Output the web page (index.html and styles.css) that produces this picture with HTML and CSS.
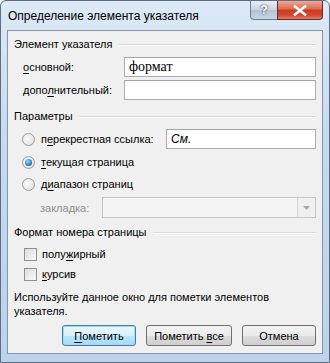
FILE: index.html
```html
<!DOCTYPE html>
<html lang="ru">

<head>
  <meta charset="UTF-8">
  <title>Определение элемента указателя</title>
  <link rel="stylesheet" href="styles.css">
</head>

<body>

  <div class="ventana">
    <div class="titulo">
      <span class="titulo-texto">Определение элемента указателя</span>
      <div class="titulo-botones">
        <span class="btn-ayuda">?</span>
        <span class="btn-cerrar">
          <svg width="14" height="11" viewBox="0 0 14 11">
            <path d="M2 1.5 L12 9.5 M12 1.5 L2 9.5" stroke="#fff" stroke-width="2.6" stroke-linecap="square"/>
          </svg>
        </span>
      </div>
    </div>

    <div class="cliente">
      <div class="grupo-titulo">Элемент указателя</div>

      <div class="fila fila-campo primera">
        <label class="etiqueta"><u>о</u>сновной:</label>
        <div class="campo campo-serif">формат</div>
      </div>
      <div class="fila fila-campo segunda">
        <label class="etiqueta">допо<u>л</u>нительный:</label>
        <div class="campo"></div>
      </div>

      <div class="grupo-titulo param">Параметры</div>

      <div class="fila radio-fila r1">
        <span class="radio"></span>
        <span class="texto-opcion">п<u>е</u>рекрестная ссылка:</span>
        <div class="campo campo-ref"><i>См.</i></div>
      </div>
      <div class="fila radio-fila r2">
        <span class="radio marcado"></span>
        <span class="texto-opcion"><u>т</u>екущая страница</span>
      </div>
      <div class="fila radio-fila r3">
        <span class="radio"></span>
        <span class="texto-opcion">д<u>и</u>апазон страниц</span>
      </div>
      <div class="fila fila-marcador">
        <span class="texto-gris">закладка:</span>
        <div class="combo">
          <span class="combo-flecha">
            <svg width="7" height="4" viewBox="0 0 7 4"><path d="M0 0 H7 L3.5 4 Z" fill="#a8a8a8"/></svg>
          </span>
        </div>
      </div>

      <div class="grupo-titulo formato">Формат номера страницы</div>

      <div class="fila check-fila c1">
        <span class="casilla"></span>
        <span class="texto-opcion">полу<u>ж</u>ирный</span>
      </div>
      <div class="fila check-fila c2">
        <span class="casilla"></span>
        <span class="texto-opcion"><u>к</u>урсив</span>
      </div>

      <p class="nota">Используйте данное окно для пометки элементов<br>указателя.</p>

      <div class="botones">
        <button class="boton predeterminado"><u>П</u>ометить</button>
        <button class="boton ancho">Пометить <u>в</u>се</button>
        <button class="boton">Отмена</button>
      </div>
    </div>
  </div>

</body>

</html>
```

FILE: styles.css
```css
body {
  margin: 0;
  font-family: "Liberation Sans", Arial, sans-serif;
  font-size: 11px;
  color: #000;
  background: #fff;
}

u {
  text-decoration-thickness: 1px;
  text-underline-offset: 2px;
}

.ventana {
  width: 330px;
  height: 363px;
  box-sizing: border-box;
  border: 1px solid #5c6f86;
  border-radius: 6px 6px 0 0;
  background: linear-gradient(#dde9f6, #c6d9ee 40%, #bcd2ea);
  display: flex;
  flex-direction: column;
}

.titulo {
  height: 29px;
  display: flex;
  justify-content: space-between;
  align-items: flex-start;
  padding-left: 7px;
}

.titulo-texto {
  margin-top: 8px;
  font-size: 12px;
  color: #000;
  white-space: nowrap;
}

.titulo-botones {
  display: flex;
  margin-right: 6px;
}

.btn-ayuda {
  width: 27px;
  height: 19px;
  box-sizing: border-box;
  border: 1px solid #6e7f93;
  border-top: none;
  border-right: none;
  border-radius: 0 0 0 4px;
  background: linear-gradient(#e6edf5, #c9d4e1 50%, #b3c1d2 51%, #c8d4e2);
  color: #fff;
  font-weight: bold;
  font-size: 13px;
  line-height: 18px;
  text-align: center;
  text-shadow: 0 0 2px #45556a, 0 0 1px #45556a;
}

.btn-cerrar {
  width: 46px;
  height: 19px;
  box-sizing: border-box;
  border: 1px solid #6e2a22;
  border-top: none;
  border-radius: 0 0 4px 0;
  background: linear-gradient(#eeaa98, #dd6a50 45%, #c93a20 50%, #d24a30 80%, #e8806a);
  display: flex;
  align-items: center;
  justify-content: center;
}

.cliente {
  flex: 1;
  margin: 0 6px 8px 6px;
  border: 1px solid #8396ad;
  background: #f0f0f0;
  padding: 6px 6px 0 6px;
  display: flex;
  flex-direction: column;
}

.grupo-titulo {
  height: 15px;
  line-height: 15px;
  display: flex;
  align-items: center;
  gap: 6px;
  white-space: nowrap;
}

.grupo-titulo::after {
  content: "";
  flex: 1;
  height: 0;
  border-top: 1px solid #dcdcdc;
  border-bottom: 1px solid #fff;
}

.param {
  margin-top: 9px;
}

.formato {
  margin-top: 7px;
}

.fila {
  display: flex;
  align-items: center;
  white-space: nowrap;
}

.fila-campo {
  height: 20px;
  padding-left: 9px;
}

.primera {
  margin-top: 5px;
}

.segunda {
  margin-top: 3px;
}

.etiqueta {
  width: 100px;
  flex: none;
}

.campo {
  flex: 1;
  height: 20px;
  box-sizing: border-box;
  border: 1px solid #abadb3;
  border-top-color: #a0a3aa;
  background: #fff;
  padding: 0 4px;
  line-height: 18px;
  margin-left: 1px;
}

.campo-serif {
  font-family: "Liberation Serif", serif;
  font-size: 14px;
}

.radio-fila {
  height: 20px;
  padding-left: 8px;
}

.r1 {
  margin-top: 5px;
}

.r2 {
  margin-top: 3px;
}

.r3 {
  margin-top: 2px;
}

.radio {
  flex: none;
  width: 13px;
  height: 13px;
  box-sizing: border-box;
  border-radius: 50%;
  border: 1px solid #9a9a9a;
  background: radial-gradient(circle at 40% 40%, #fafafa, #dcdcdc);
  margin-right: 6px;
  position: relative;
}

.marcado::after {
  content: "";
  position: absolute;
  left: 2px;
  top: 2px;
  width: 7px;
  height: 7px;
  border-radius: 50%;
  background: radial-gradient(circle at 40% 35%, #9fdcf8, #2a7fb6 60%, #185c92);
}

.campo-ref {
  flex: none;
  width: 150px;
  margin-left: auto;
  margin-right: 0;
  font-style: italic;
  font-size: 12px;
}

.fila-marcador {
  height: 21px;
  margin-top: 3px;
  padding-left: 26px;
}

.texto-gris {
  color: #8d8d8d;
  width: 62px;
  flex: none;
}

.combo {
  flex: 1;
  height: 21px;
  box-sizing: border-box;
  border: 1px solid #c5c5c5;
  background: #f4f4f4;
  display: flex;
  justify-content: flex-end;
}

.combo-flecha {
  width: 17px;
  border-left: 1px solid #d5d5d5;
  display: flex;
  align-items: center;
  justify-content: center;
  background: #f0f0f0;
}

.check-fila {
  height: 18px;
  padding-left: 10px;
}

.c1 {
  margin-top: 5px;
}

.c2 {
  margin-top: 2px;
}

.casilla {
  flex: none;
  width: 13px;
  height: 13px;
  box-sizing: border-box;
  border: 1px solid #8e8f8f;
  background: linear-gradient(135deg, #dcdcdc, #fafafa);
  margin-right: 5px;
}

.nota {
  margin: 7px 0 0 0;
  line-height: 14px;
  white-space: nowrap;
}

.botones {
  display: flex;
  justify-content: flex-end;
  gap: 10px;
  margin-top: 7px;
}

.boton {
  height: 21px;
  width: 74px;
  font-family: inherit;
  font-size: 11px;
  border: 1px solid #707070;
  border-radius: 3px;
  background: linear-gradient(#f2f2f2, #ebebeb 50%, #dddddd 51%, #cfcfcf);
  padding: 0;
  color: #000;
}

.ancho {
  width: 86px;
}

.predeterminado {
  border-color: #3c7fb1;
  box-shadow: inset 0 0 0 1px #9fdcf5;
  background: linear-gradient(#eaf6fd, #d9f0fc 50%, #bee6fd 51%, #a7d9f5);
}
```
